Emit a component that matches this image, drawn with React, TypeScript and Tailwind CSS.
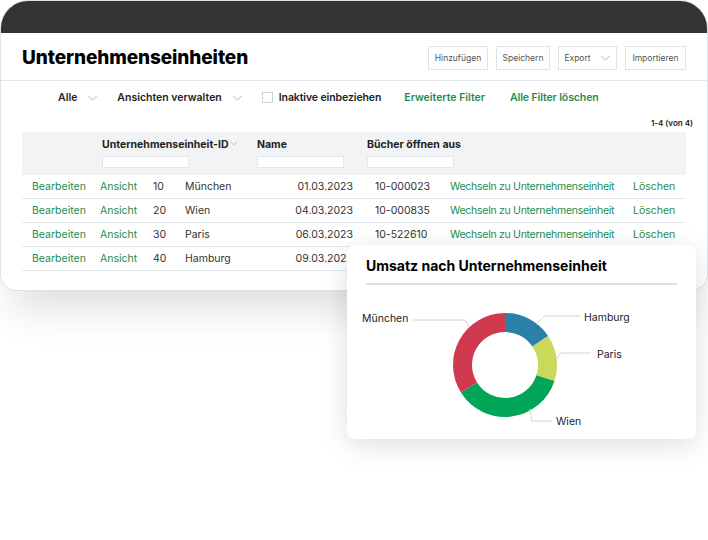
import React from "react";

const rows = [
  { id: "10", name: "München", date: "01.03.2023", code: "10-000023" },
  { id: "20", name: "Wien", date: "04.03.2023", code: "10-000835" },
  { id: "30", name: "Paris", date: "06.03.2023", code: "10-522610" },
  { id: "40", name: "Hamburg", date: "09.03.2023", code: "" },
];

const slices = [
  { label: "Hamburg", from: 0, to: 56, color: "#2b80a8" },
  { label: "Paris", from: 56, to: 108, color: "#cbd95b" },
  { label: "Wien", from: 108, to: 238, color: "#00a558" },
  { label: "München", from: 238, to: 360, color: "#d03a4f" },
];

function Chevron({ className = "" }: { className?: string }) {
  return (
    <svg viewBox="0 0 12 7" className={className} fill="none">
      <polyline points="1,1 6,6 11,1" stroke="#a7b3bf" strokeWidth="1.1" />
    </svg>
  );
}

// donut slice path, angles clockwise from top
function arc(cx: number, cy: number, ro: number, ri: number, a0: number, a1: number) {
  const p = (r: number, a: number) => {
    const rad = (a * Math.PI) / 180;
    return `${(cx + r * Math.sin(rad)).toFixed(2)},${(cy - r * Math.cos(rad)).toFixed(2)}`;
  };
  const large = a1 - a0 > 180 ? 1 : 0;
  return `M${p(ro, a0)} A${ro},${ro} 0 ${large} 1 ${p(ro, a1)} L${p(ri, a1)} A${ri},${ri} 0 ${large} 0 ${p(ri, a0)} Z`;
}

function Donut() {
  const cx = 158;
  const cy = 80;
  return (
    <svg width="349" height="153" viewBox="0 0 349 153">
      {slices.map((s) => (
        <path key={s.label} d={arc(cx, cy, 52, 33, s.from, s.to)} fill={s.color} />
      ))}
      <g stroke="#cfd5dc" strokeWidth="1" fill="none">
        <polyline points="66,35 118,35 122,42" />
        <polyline points="190,38 198,31 233,31" />
        <polyline points="209,76 213,68 244,68" />
        <polyline points="183,124 185,136 205,136" />
      </g>
      <g fill="#222" fontSize="10.5" fontFamily="Inter, sans-serif">
        <text x="15" y="37">München</text>
        <text x="237" y="36">Hamburg</text>
        <text x="250" y="73">Paris</text>
        <text x="209" y="140">Wien</text>
      </g>
    </svg>
  );
}

export default function App() {
  return (
    <div className="relative w-[708px] h-[540px] bg-white font-[Inter,sans-serif] text-[#222]">
      {/* Window */}
      <div className="w-[708px] rounded-t-[28px] rounded-b-[16px] border border-[#dde2e7] bg-white overflow-hidden shadow-[0_30px_40px_-12px_rgba(0,0,0,0.13)]">
        <div className="h-[32px] bg-[#333333]" />

        <div className="h-[48px] flex items-center justify-between pt-[3px] pl-[21px] pr-[21px] border-b border-[#e3e7eb]">
          <h1 className="text-[19px] font-extrabold tracking-[-0.1px] text-black">Unternehmenseinheiten</h1>
          <div className="flex items-center gap-[8px] text-[8.5px] text-[#555]">
            <button className="h-[24px] w-[60px] border border-[#dde3e8]">Hinzufügen</button>
            <button className="h-[24px] w-[54px] border border-[#dde3e8]">Speichern</button>
            <button className="h-[24px] w-[59px] border border-[#dde3e8] flex items-center justify-center gap-[9px]">
              Export
              <Chevron className="w-[11px] h-[6px]" />
            </button>
            <button className="h-[24px] w-[61px] border border-[#dde3e8]">Importieren</button>
          </div>
        </div>

        <div className="h-[33px] flex items-center pl-[57px] text-[10.5px] font-semibold">
          <span>Alle</span>
          <Chevron className="w-[11px] h-[6px] ml-[10px]" />
          <span className="ml-[19px]">Ansichten verwalten</span>
          <Chevron className="w-[11px] h-[6px] ml-[10px]" />
          <span className="ml-[19px] w-[11px] h-[11px] border border-[#cdd3d9] bg-white" />
          <span className="ml-[6px] tracking-[-0.1px]">Inaktive einbeziehen</span>
          <span className="ml-[23px] text-[#1d8c4e]">Erweiterte Filter</span>
          <span className="ml-[25px] text-[#1d8c4e] tracking-[-0.1px]">Alle Filter löschen</span>
        </div>

        <div className="h-[18px] flex items-center justify-end pr-[14px] text-[8px] font-semibold">1-4 (von 4)</div>

        <div className="mx-[21px]">
          <div className="h-[43px] bg-[#f2f3f5] pt-[5px] text-[10.5px] font-bold">
            <div className="flex">
              <div className="w-[80px]" />
              <div className="w-[155px] flex items-start">
                Unternehmenseinheit-ID
                <Chevron className="w-[8px] h-[5px] mt-[4px] ml-[1px]" />
              </div>
              <div className="w-[110px]">Name</div>
              <div>Bücher öffnen aus</div>
            </div>
            <div className="flex mt-[3px]">
              <div className="w-[80px]" />
              <div className="w-[155px]"><div className="w-[87px] h-[12px] bg-white border border-[#e3e6ea]" /></div>
              <div className="w-[110px]"><div className="w-[87px] h-[12px] bg-white border border-[#e3e6ea]" /></div>
              <div className="w-[87px] h-[12px] bg-white border border-[#e3e6ea]" />
            </div>
          </div>

          {rows.map((r) => (
            <div key={r.id} className="h-[24px] flex items-center pl-[10px] border-b border-[#e3e6ea] text-[10.5px] text-[#333]">
              <span className="w-[68px] text-[#1d8c4e]">Bearbeiten</span>
              <span className="w-[53px] text-[#1d8c4e]">Ansicht</span>
              <span className="w-[32px]">{r.id}</span>
              <span className="w-[90px]">{r.name}</span>
              <span className="w-[78px] text-right">{r.date}</span>
              <span className="w-[22px]" />
              <span className="w-[75px]">{r.code}</span>
              <span className="w-[183px] text-[#1d8c4e] tracking-[-0.28px]">{r.code ? "Wechseln zu Unternehmenseinheit" : ""}</span>
              <span className="text-[#1d8c4e]">{r.code ? "Löschen" : ""}</span>
            </div>
          ))}
        </div>
        <div className="h-[19px]" />
      </div>

      {/* Chart card */}
      <div className="absolute left-[347px] top-[245px] w-[349px] h-[194px] bg-white rounded-[8px] shadow-[0_6px_28px_rgba(0,0,0,0.13)]">
        <div className="h-[40px] mx-[19px] pt-[3px] flex items-center border-b-2 border-[#dde2e7]">
          <h2 className="text-[14px] font-bold text-black">Umsatz nach Unternehmenseinheit</h2>
        </div>
        <Donut />
      </div>
    </div>
  );
}
